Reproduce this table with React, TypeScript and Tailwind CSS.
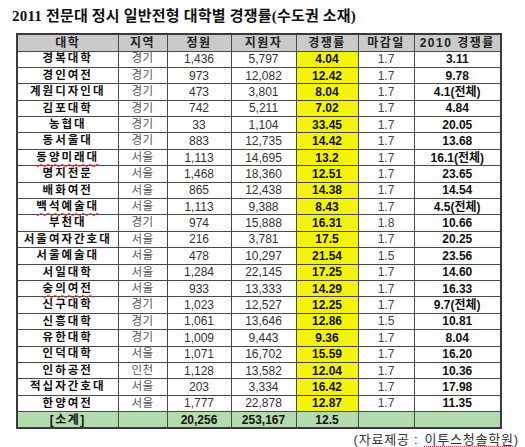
const rows: [string, string, string, string, string, string, string, boolean?][] = [
    ['경복대학', '경기', '1,436', '5,797', '4.04', '1.7', '3.11'],
    ['경인여전', '경기', '973', '12,082', '12.42', '1.7', '9.78'],
    ['계원디자인대', '경기', '473', '3,801', '8.04', '1.7', '4.1(전체)'],
    ['김포대학', '경기', '742', '5,211', '7.02', '1.7', '4.84'],
    ['농협대', '경기', '33', '1,104', '33.45', '1.7', '20.05'],
    ['동서울대', '경기', '883', '12,735', '14.42', '1.7', '13.68'],
    ['동양미래대', '서울', '1,113', '14,695', '13.2', '1.7', '16.1(전체)', true],
    ['명지전문', '서울', '1,468', '18,360', '12.51', '1.7', '23.65'],
    ['배화여전', '서울', '865', '12,438', '14.38', '1.7', '14.54'],
    ['백석예술대', '서울', '1,113', '9,388', '8.43', '1.7', '4.5(전체)', true],
    ['부천대', '경기', '974', '15,888', '16.31', '1.8', '10.66'],
    ['서울여자간호대', '서울', '216', '3,781', '17.5', '1.7', '20.25'],
    ['서울예술대', '서울', '478', '10,297', '21.54', '1.5', '23.56'],
    ['서일대학', '서울', '1,284', '22,145', '17.25', '1.7', '14.60'],
    ['숭의여전', '서울', '933', '13,333', '14.29', '1.7', '16.33', true],
    ['신구대학', '경기', '1,023', '12,527', '12.25', '1.7', '9.7(전체)'],
    ['신흥대학', '경기', '1,061', '13,646', '12.86', '1.5', '10.81'],
    ['유한대학', '경기', '1,009', '9,443', '9.36', '1.7', '8.04'],
    ['인덕대학', '서울', '1,071', '16,702', '15.59', '1.7', '16.20'],
    ['인하공전', '인천', '1,128', '13,582', '12.04', '1.7', '10.36'],
    ['적십자간호대', '서울', '203', '3,334', '16.42', '1.7', '17.98'],
    ['한양여전', '서울', '1,777', '22,878', '12.87', '1.7', '11.35'],
];

const cell = 'border border-[#4a4a4a] text-center p-0 leading-none';

const App = () => {
    return (
        <div className="w-[525px] h-[447px] bg-white font-['Liberation_Sans','Noto_Sans_CJK_KR',sans-serif] text-[#222]">
            <div className="pl-[12px] pt-[6px] h-[20px] text-[15px] leading-[20px] font-bold text-[#111] font-['Liberation_Serif','Noto_Sans_CJK_KR',serif] tracking-[0.2px]">
                2011 전문대 정시 일반전형 대학별 경쟁률(수도권 소재)
            </div>
            <table className="ml-[16px] mt-[13px] w-[484px] border-collapse border-2 border-[#3a3a3a] table-fixed">
                <colgroup>
                    <col className="w-[101px]" />
                    <col className="w-[49px]" />
                    <col className="w-[64px]" />
                    <col className="w-[65px]" />
                    <col className="w-[62px]" />
                    <col className="w-[56px]" />
                    <col className="w-[87px]" />
                </colgroup>
                <thead>
                    <tr className="h-[17px] bg-[#cacaca] text-[12px] font-bold text-[#222] tracking-[1.5px]">
                        <th className={cell}>대학</th>
                        <th className={cell}>지역</th>
                        <th className={cell}>정원</th>
                        <th className={cell}>지원자</th>
                        <th className={cell}>경쟁률</th>
                        <th className={cell}>마감일</th>
                        <th className={cell}>2010 경쟁률</th>
                    </tr>
                </thead>
                <tbody>
                    {rows.map(([name, area, quota, apply, rate, night, prev, spell]) => (
                        <tr key={name} className="h-[16.4px] text-[12px]">
                            <td className={`${cell} text-[11.5px] font-bold text-[#111] tracking-[2px]`}>
                                <span className={spell ? 'underline decoration-wavy decoration-red-500 decoration-1 underline-offset-2' : ''}>{name}</span>
                            </td>
                            <td className={`${cell} text-[11.5px] text-[#555] tracking-[0.5px]`}>{area}</td>
                            <td className={`${cell} text-[#333]`}>{quota}</td>
                            <td className={`${cell} text-[#333]`}>{apply}</td>
                            <td className={`${cell} bg-[#f4f40a] font-bold text-[#111]`}>{rate}</td>
                            <td className={`${cell} text-[#444]`}>{night}</td>
                            <td className={`${cell} font-bold text-[#111]`}>{prev}</td>
                        </tr>
                    ))}
                    <tr className="h-[16.4px] text-[12px] bg-[#b3dcae] font-bold text-[#111]">
                        <td className={`${cell} tracking-[1.5px]`}>[소계]</td>
                        <td className={cell}></td>
                        <td className={cell}>20,256</td>
                        <td className={cell}>253,167</td>
                        <td className={cell}>12.5</td>
                        <td className={cell}></td>
                        <td className={cell}></td>
                    </tr>
                </tbody>
            </table>
            <div className="flex justify-end pr-[6px] mt-[3px] text-[13px] leading-[16px] text-[#333] tracking-[0.8px]">
                (자료제공 :{' '}
                <span className="ml-[6px] underline decoration-dotted decoration-red-500 underline-offset-2">이투스청솔학원</span>)
            </div>
        </div>
    );
};

export default App;
